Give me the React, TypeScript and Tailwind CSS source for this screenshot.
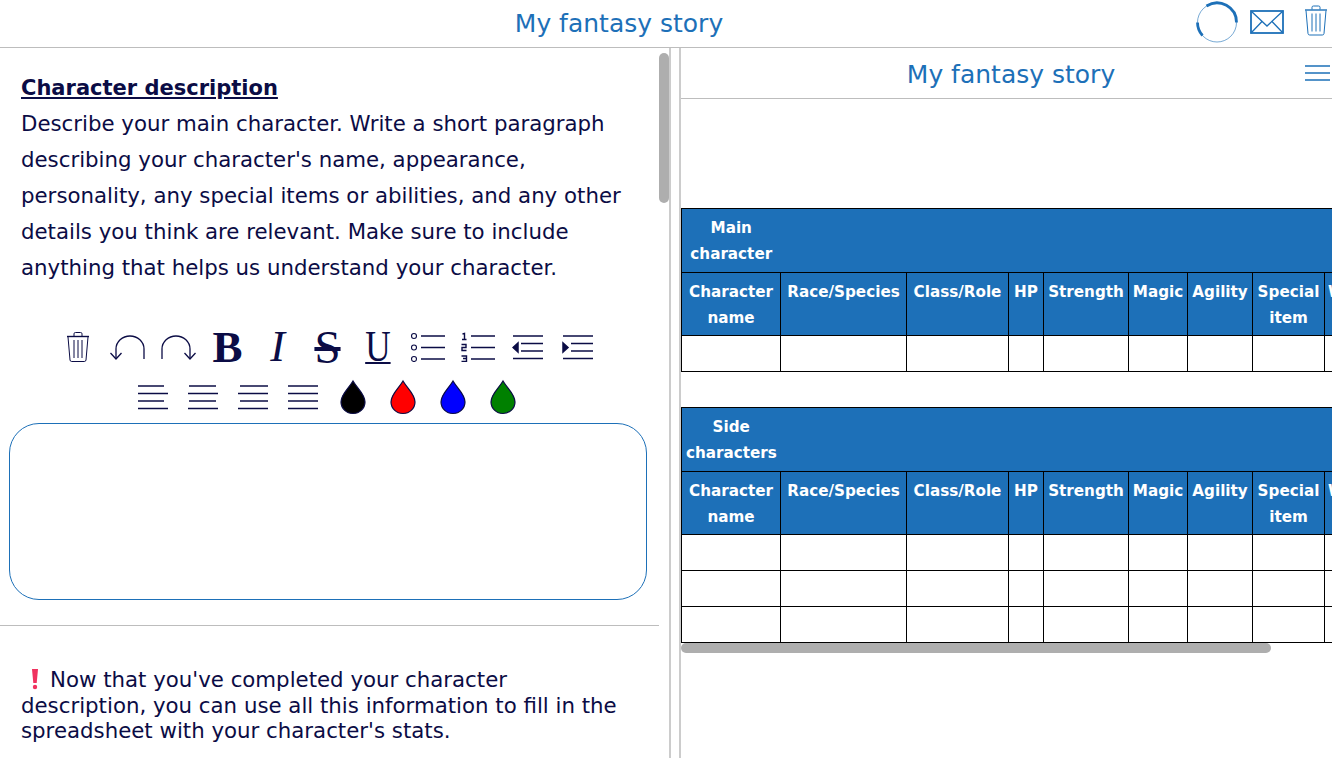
import React from "react";

const BLUE = "#1d70b8";
const NAVY = "#0b0c45";

function Trash({ color, w, h }: { color: string; w: number; h: number }) {
  return (
    <svg width={w} height={h} viewBox="0 0 24 32" fill="none" stroke={color} strokeWidth="1">
      <path d="M1 5.5h22" strokeWidth="1.4" />
      <path d="M8 5V2.8Q8 1.5 9.5 1.5h5Q16 1.5 16 2.8V5" />
      <path d="M2 6l2 23q.2 1.5 1.7 1.5h12.6q1.500 0 1.700-1.500l2-23" />
      <path d="M8 9v18M12 9v18M16 9v18" />
    </svg>
  );
}

function Lines({ cx }: { cx: [number, number][] }) {
  const ys = [4, 11.5, 19, 26.5];
  return (
    <svg width="32" height="30" viewBox="0 0 32 30" stroke={NAVY} strokeWidth="1.500" fill="none">
      {ys.map((y, i) => (
        <path key={i} d={`M${cx[i][0]} ${y}H${cx[i][1]}`} />
      ))}
    </svg>
  );
}

function ToolButton({ children }: { children: React.ReactNode }) {
  return <div className="w-[50px] h-[50px] flex items-center justify-center">{children}</div>;
}

function Undo({ flip }: { flip?: boolean }) {
  return (
    <svg width="36" height="28" viewBox="0 0 36 28" fill="none" stroke={NAVY} strokeWidth="1.300" className={flip ? "-scale-x-100" : ""}>
      <path d="M34 26V16a14 13 0 0 0-28 0v10" />
      <path d="M0.500 20L6 26l5.500-6" />
    </svg>
  );
}

function Drop({ fill }: { fill: string }) {
  return (
    <svg width="26" height="36" viewBox="0 0 26 36" stroke={NAVY} strokeWidth="1.200" fill={fill}>
      <path d="M13 2C9 9 1 15 1 23a12 11.500 0 0 0 24 0C25 15 17 9 13 2Z" />
    </svg>
  );
}

function Bullets() {
  return (
    <svg width="36" height="30" viewBox="0 0 36 30" fill="none" stroke={NAVY} strokeWidth="1.500">
      <circle cx="4" cy="4" r="2.500" strokeWidth="1.100" />
      <circle cx="4" cy="15.500" r="2.500" strokeWidth="1.100" />
      <circle cx="4" cy="27" r="2.500" strokeWidth="1.100" />
      <path d="M11 4h24M11 15.500h24M11 27h24" />
    </svg>
  );
}

function Numbered() {
  return (
    <svg width="36" height="30" viewBox="0 0 36 30" fill="none" stroke={NAVY} strokeWidth="1.400">
      <path d="M2.500 2l2-.5v6M2 7.500h4.500" />
      <path d="M1.500 12.500h4.500v3H2v3h4.500" />
      <path d="M1.500 24h5v2.500H3h3.500v3h-5" />
      <path d="M11 4h24M11 15.500h24M11 27h24" />
    </svg>
  );
}

function Indent({ out }: { out?: boolean }) {
  return (
    <svg width="32" height="30" viewBox="0 0 32 30" fill="none" stroke={NAVY} strokeWidth="1.500">
      <path d="M1 4h30M9 11.500h22M9 19h22M1 26.500h30" />
      {out ? <path d="M6 11v9l-5-4.500Z" fill={NAVY} /> : <path d="M1 11v9l5-4.500Z" fill={NAVY} />}
    </svg>
  );
}

const heads = ["Character name", "Race/Species", "Class/Role", "HP", "Strength", "Magic", "Agility", "Special item", "Weapon"];

function SheetTable({ title, rows, first }: { title: string; rows: number; first?: boolean }) {
  const cell = "border border-black";
  return (
    <table className={`table-fixed border-collapse w-[719px] text-[15.200px] font-bold text-white text-center leading-[26px] ${first ? "" : "mt-[35px]"}`}>
      <colgroup>
        <col className="w-[99px]" />
        <col className="w-[126px]" />
        <col className="w-[102px]" />
        <col className="w-[35px]" />
        <col className="w-[85px]" />
        <col className="w-[59px]" />
        <col className="w-[65px]" />
        <col className="w-[72px]" />
        <col className="w-[76px]" />
      </colgroup>
      <tbody>
        <tr className="h-[64px] bg-[#1d70b8]">
          <td className={`${cell} px-[4px] border-r-0 `}>{title}</td>
          <td colSpan={8} className={`${cell} border-l-0`} />
        </tr>
        <tr className="h-[63px] bg-[#1d70b8] align-top">
          {heads.map((h) => (
            <td key={h} className={`${cell} whitespace-pre-line pt-[6px]`}>
              {h === "Character name" ? "Character\nname" : h === "Special item" ? "Special\nitem" : h}
            </td>
          ))}
        </tr>
        {Array.from({ length: rows }).map((_, r) => (
          <tr key={r} className="h-[36px] bg-white">
            {heads.map((h) => (
              <td key={h} className={cell} />
            ))}
          </tr>
        ))}
      </tbody>
    </table>
  );
}

export default function App() {
  const serif = "font-['Liberation_Serif',serif] leading-none";
  return (
    <div className="w-[1332px] h-[758px] overflow-hidden bg-white flex flex-col font-['DejaVu_Sans',sans-serif]" style={{ color: NAVY }}>
      <header className="h-[48px] shrink-0 border-b border-[#bdbdbd] flex items-start">
        <div className="w-[1196px] pl-[42px] h-[47px] flex items-center justify-center text-[25px] text-[#1d70b8]">My fantasy story</div>
        <div className="flex-1 flex items-start">
          <svg width="42" height="44" viewBox="0 0 42 44" fill="none" stroke={BLUE} className="mt-px">
            <circle cx="21" cy="21.500" r="19.500" strokeWidth="1" strokeOpacity="0.600" />
            <path d="M40.500 21.500A19.500 19.500 0 0 0 10.500 5" strokeWidth="2.800" />
            <path d="M1.500 21.500A19.500 19.500 0 0 0 6.500 34.500" strokeWidth="2.800" />
          </svg>
          <svg width="34" height="24" viewBox="0 0 34 24" fill="none" stroke={BLUE} strokeWidth="1.300" className="mt-[10px] ml-[12px]">
            <rect x="1" y="1" width="32" height="22" strokeWidth="1.800" />
            <path d="M1 1l16 15L33 1M1 23l11-11.500M33 23L22 11.500" />
          </svg>
          <div className="ml-[20px] mt-[4px]">
            <Trash color={BLUE} w={24} h={33} />
          </div>
        </div>
      </header>

      <div className="flex-1 flex min-h-0">
        <div className="relative w-[671px] shrink-0 border-r-2 border-[#cccccc] overflow-hidden">
          <div className="w-[659px] pt-[22px]">
            <div className="px-[21px] text-[21.300px] leading-[36px]">
              <div className="font-bold underline text-[21px]">Character description</div>
              <p>
                Describe your main character. Write a short paragraph describing your character's name, appearance, personality, any special items or abilities, and any other details you think are relevant. Make sure to include anything that helps us understand your character.
              </p>
            </div>
            <div className="mt-[36px] flex flex-wrap justify-center pl-[46px] pr-[50px]">
              <ToolButton><Trash color={NAVY} w={24} h={32} /></ToolButton>
              <ToolButton><Undo /></ToolButton>
              <ToolButton><Undo flip /></ToolButton>
              <ToolButton><span className={`${serif} font-bold text-[45px]`}>B</span></ToolButton>
              <ToolButton><span className={`${serif} italic text-[44px]`}>I</span></ToolButton>
              <ToolButton><span className={`${serif} line-through text-[47px]`}>S</span></ToolButton>
              <ToolButton><span className={`${serif} underline decoration-2 underline-offset-[1px] inline-block scale-x-[.8] text-[44px]`}>U</span></ToolButton>
              <ToolButton><Bullets /></ToolButton>
              <ToolButton><Numbered /></ToolButton>
              <ToolButton><Indent out /></ToolButton>
              <ToolButton><Indent /></ToolButton>
              <ToolButton><Lines cx={[[1, 27], [1, 31], [1, 27], [1, 31]]} /></ToolButton>
              <ToolButton><Lines cx={[[2, 29], [1, 31], [2, 29], [1, 31]]} /></ToolButton>
              <ToolButton><Lines cx={[[3, 31], [1, 31], [3, 31], [1, 31]]} /></ToolButton>
              <ToolButton><Lines cx={[[1, 31], [1, 31], [1, 31], [1, 31]]} /></ToolButton>
              <ToolButton><Drop fill="#000000" /></ToolButton>
              <ToolButton><Drop fill="#ff0000" /></ToolButton>
              <ToolButton><Drop fill="#0000ff" /></ToolButton>
              <ToolButton><Drop fill="#008000" /></ToolButton>
            </div>
            <div className="mt-px ml-[9px] w-[638px] h-[177px] rounded-[30px] border border-[#1d70b8]" />
            <div className="mt-[25px] border-t border-[#bdbdbd]" />
            <p className="mt-[41px] ml-[21px] w-[605px] text-[21.300px] leading-[25.500px]">
              <svg width="29" height="22" viewBox="0 0 29 22" className="inline-block align-[-3px]">
                <path d="M11 1h6l-1.300 14h-3.400Z" fill="#f0325f" />
                <circle cx="14" cy="19" r="2.200" fill="#f0325f" />
              </svg>
              Now that you've completed your character description, you can use all this information to fill in the spreadsheet with your character's stats.
            </p>
          </div>
          <div className="absolute left-[659px] top-[5px] w-[10px] h-[150px] rounded-full bg-[#aeaeae]" />
        </div>

        <div className="relative flex-1 min-w-0 ml-[8px] border-l-2 border-[#cccccc] overflow-hidden">
          <div className="h-[51px] border-b border-[#bdbdbd] flex items-center">
            <div className="flex-1 pl-[40px] pt-[3px] text-center text-[25px] text-[#1d70b8]">My fantasy story</div>
            <svg width="30" height="18" viewBox="0 0 30 18" stroke={BLUE} strokeWidth="1.400" className="mr-px">
              <path d="M4 2h25M4 9h25M4 16h25" />
            </svg>
          </div>
          <div className="pt-[109px]">
            <SheetTable title="Main character" rows={1} first />
            <SheetTable title="Side characters" rows={3} />
          </div>
          <div className="absolute left-0 top-[595px] w-[590px] h-[10px] rounded-full bg-[#aeaeae]" />
        </div>
      </div>
    </div>
  );
}
